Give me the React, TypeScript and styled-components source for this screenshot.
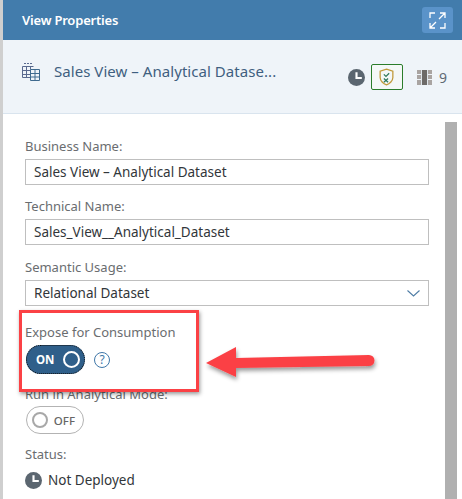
import React from "react";
import styled, { createGlobalStyle } from "styled-components";

const Global = createGlobalStyle`
  html, body { margin: 0; padding: 0; background: #fff; }
  body { width: 462px; height: 499px; overflow: hidden; font-family: "Noto Sans", "Open Sans", sans-serif; color: #32363a; }
  * { box-sizing: border-box; }
`;
const Page = styled.div`
  position: relative; display: flex; width: 462px; height: 499px; overflow: hidden;
`;
const Rail = styled.div`width: 3px; background: #cfcfcf; flex: none;`;
const Panel = styled.div`flex: 1; display: flex; flex-direction: column; min-width: 0;`;
const Header = styled.header`
  height: 40px; background: #427cac; display: flex; align-items: center; justify-content: space-between;
  padding: 0 9px 0 19px; flex: none;
`;
const Title = styled.h1`margin: 0; font-size: 13px; font-weight: 600; color: #fff; letter-spacing: -0.2px;`;
const ExpandButton = styled.div`
  width: 31px; height: 26px; border-radius: 3px; background: #5a93c9; display: flex; align-items: center; justify-content: center;
`;
const SubHeader = styled.div`
  height: 74px; flex: none; background: #eff4f9; border-bottom: 1px solid #d9e4ee; display: flex; align-items: flex-start;
  padding: 20px 15px 0 19px;
`;
const ObjectIcon = styled.svg`flex: none; margin-top: 3px;`;
const ObjectName = styled.div`
  margin-left: 14px; flex: 1; font-size: 15px; line-height: 22px; color: #3f5f80; white-space: nowrap; letter-spacing: 0.05px;
`;
const StatusBadge = styled.div`
  width: 32px; height: 26px; border: 1px solid #2b7d2b; border-radius: 2px; margin: 0 0 0 6px; display: flex; align-items: center; justify-content: center; background: #f4f8f7;
`;
const Meta = styled.div`display: flex; align-items: center; height: 26px; margin-top: 4px;`;
const FilmIcon = styled.svg`margin-left: 14px;`;
const Count = styled.span`margin-left: 7px; font-size: 14px; color: #5f6a74;`;
const Body = styled.div`flex: 1; display: flex; min-height: 0; padding-top: 8px;`;
const Form = styled.div`width: 442px; padding: 15px 16px 0 22px; flex: none;`;
const Scrollbar = styled.div`width: 12px; background: #b0b0b0; flex: none;`;
const Label = styled.div<{ $top?: number }>`
  font-size: 13px; line-height: 18px; color: #6a6d70; margin-top: ${p => p.$top ?? 0}px; white-space: nowrap;
`;
const Field = styled.div`
  margin-top: 4px; height: 26px; width: 404px; border: 1px solid #bfbfbf; background: #fff; padding: 0 8px;
  display: flex; align-items: center; justify-content: space-between; font-size: 13.5px; color: #32363a; white-space: nowrap;
`;
const ToggleRow = styled.div<{ $top: number }>`display: flex; align-items: center; margin-top: ${p => p.$top}px;`;
const OnToggle = styled.div`
  width: 59px; height: 29px; margin-left: 1px; border-radius: 15px; background: #2f5f8a; outline: 1px dotted #111; outline-offset: -1px;
  display: flex; align-items: center; justify-content: space-between; padding: 0 5px 0 10px; color: #fff; font-size: 11.5px; font-weight: 700;
`;
const OnKnob = styled.span`width: 17px; height: 17px; border: 2px solid #fff; border-radius: 50%; background: #2f5f8a;`;
const OffToggle = styled.div`
  width: 58px; height: 28px; margin-left: 1px; border-radius: 14px; background: #fff; border: 1px solid #b3b3b3;
  display: flex; align-items: center; justify-content: space-between; padding: 0 8px 0 5px; color: #666; font-size: 11.5px; font-weight: 500;
`;
const OffKnob = styled.span`width: 16px; height: 16px; border: 2px solid #a8a8a8; border-radius: 50%;`;
const HelpIcon = styled.span`
  width: 16px; height: 16px; margin-left: 9px; border: 1.5px solid #3f77a8; border-radius: 50%; color: #3f77a8;
  font-size: 12px; line-height: 13px; text-align: center;
`;
const StatusRow = styled.div`display: flex; align-items: center; margin-top: 8px; font-size: 13.5px; color: #32363a; gap: 6px;`;
const Callout = styled.div`
  position: absolute; left: 19px; top: 310px; width: 180px; height: 82px; border: 3px solid #fb4145;
  box-shadow: 1px 2px 4px rgba(0,0,0,.4);
`;
const ArrowSvg = styled.svg`position: absolute; left: 200px; top: 340px; overflow: visible;`;

const Clock = () => (
  <svg width="17" height="17" viewBox="0 0 16 16">
    <circle cx="8" cy="8" r="8" fill="#5b6670" />
    <path d="M8 3v5.500h5" stroke="#fff" strokeWidth="2" fill="none" />
  </svg>
);

export default function App() {
  return (
    <Page>
      <Global />
      <Rail />
      <Panel>
        <Header>
          <Title>View Properties</Title>
          <ExpandButton>
            <svg width="17" height="17" viewBox="0 0 17 17" fill="none" stroke="#fff" strokeWidth="1.300">
              <path d="M1 6V1h5M11 1h5v5M16 1l-6 6M1 11v5h5M7 10l-6 6M11 16h5v-5" />
            </svg>
          </ExpandButton>
        </Header>
        <SubHeader>
          <ObjectIcon width="18" height="18" viewBox="0 0 18 18" fill="none" stroke="#5a6a8f" strokeWidth="1">
            <path d="M2 .5h2M5 .5h2M8 .500h2M.5 3.500h11M.5 3.500v11h8M.5 7.500h8M.5 11.500h8M4.500 3.500v11M8.500 3.500v3" />
            <path d="M8.500 6.500h9v11h-9zM8.500 10.500h9M8.500 14h9M13 6.500v11" stroke="#3f6a8f" />
          </ObjectIcon>
          <ObjectName>Sales View – Analytical Datase...</ObjectName>
          <Meta>
            <Clock />
            <StatusBadge>
              <svg width="15" height="18" viewBox="0 0 14 17" fill="none" strokeWidth="1.200">
                <path d="M7 1l6 2v6c0 3-3 6-6 7-3-1-6-4-6-7V3z" stroke="#c19a3a" />
                <path d="M4.500 6l2 2 3-3M4.500 10l4 3.500M8.500 10l-4 3.500" stroke="#2f7a5c" />
              </svg>
            </StatusBadge>
            <FilmIcon width="15" height="15" viewBox="0 0 15 15">
              <rect x="0" y="0" width="15" height="15" fill="#a9a4a2" />
              <rect x="5" y="0" width="5" height="15" fill="#6d6a68" />
              <path d="M4.500 0v15M10.500 0v15" stroke="#dfe6ec" strokeWidth="1" />
              <path d="M0 4.500h4M0 9.500h4M11 4.500h4M11 9.500h4" stroke="#eff4f9" strokeWidth="1" />
            </FilmIcon>
            <Count>9</Count>
          </Meta>
        </SubHeader>
        <Body>
          <Form>
            <Label>Business Name:</Label>
            <Field>Sales View – Analytical Dataset</Field>
            <Label $top={12}>Technical Name:</Label>
            <Field>Sales_View__Analytical_Dataset</Field>
            <Label $top={13}>Semantic Usage:</Label>
            <Field>
              Relational Dataset
              <svg width="13" height="7" viewBox="0 0 13 7" fill="none" stroke="#4f7da5" strokeWidth="1.100">
                <path d="M.5.500l6 5.500 6-5.500" />
              </svg>
            </Field>
            <Label $top={17}>Expose for Consumption</Label>
            <ToggleRow $top={4}>
              <OnToggle>ON<OnKnob /></OnToggle>
              <HelpIcon>?</HelpIcon>
            </ToggleRow>
            <Label $top={11}>Run in Analytical Mode:</Label>
            <ToggleRow $top={3}>
              <OffToggle><OffKnob />OFF</OffToggle>
            </ToggleRow>
            <Label $top={11}>Status:</Label>
            <StatusRow><Clock />Not Deployed</StatusRow>
          </Form>
          <Scrollbar />
        </Body>
      </Panel>
      <Callout />
      <ArrowSvg width="180" height="50" viewBox="0 0 180 50">
        <defs>
          <filter id="arrowShadow" x="-10%" y="-30%" width="120%" height="170%">
            <feDropShadow dx="1" dy="3" stdDeviation="2" floodColor="#000" floodOpacity="0.4" />
          </filter>
        </defs>
        <path d="M6 23L36 7v11l133-3a5.500 5.500 0 0 1 0 11L36 28v9z" fill="#fb4145" filter="url(#arrowShadow)" />
      </ArrowSvg>
    </Page>
  );
}
